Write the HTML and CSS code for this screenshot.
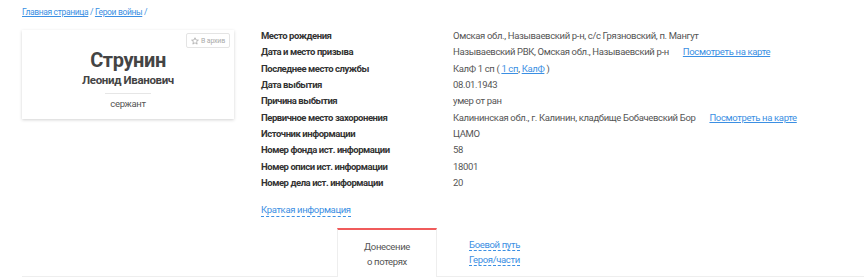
FILE: index.html
```html
<!DOCTYPE html>
<html lang="ru">
<head>
  <title>Струнин Леонид Иванович</title>
  <meta charset="UTF-8">
  <link rel="stylesheet" href="styles.css">
</head>
<body>
  <div class="page">
    <div class="crumbs">
      <a href="#">Главная страница</a> / <a href="#">Герои войны</a> /
    </div>
    <div class="hero">
      <div class="card">
        <button class="archive" type="button">
          <svg width="8" height="8" viewBox="0 0 16 16"><polygon points="8,1.5 10,6 14.8,6.3 11.1,9.4 12.3,14.2 8,11.6 3.7,14.2 4.9,9.4 1.2,6.3 6,6" fill="none" stroke="#999" stroke-width="1.3" stroke-linejoin="round"/></svg>
          В архив
        </button>
        <div class="surname">Струнин</div>
        <div class="given">Леонид Иванович</div>
        <div class="rank">сержант</div>
      </div>
      <div class="info">
        <dl class="facts">
          <dt>Место рождения</dt>
          <dd>Омская обл., Называевский р-н, с/с Грязновский, п. Мангут</dd>
          <dt>Дата и место призыва</dt>
          <dd>Называевский РВК, Омская обл., Называевский р-н <a class="map" href="#">Посмотреть на карте</a></dd>
          <dt>Последнее место службы</dt>
          <dd>КалФ 1 сп ( <a href="#">1 сп</a>, <a href="#">КалФ</a> )</dd>
          <dt>Дата выбытия</dt>
          <dd>08.01.1943</dd>
          <dt>Причина выбытия</dt>
          <dd>умер от ран</dd>
          <dt>Первичное место захоронения</dt>
          <dd>Калининская обл., г. Калинин, кладбище Бобачевский Бор <a class="map" href="#">Посмотреть на карте</a></dd>
          <dt>Источник информации</dt>
          <dd>ЦАМО</dd>
          <dt>Номер фонда ист. информации</dt>
          <dd>58</dd>
          <dt>Номер описи ист. информации</dt>
          <dd>18001</dd>
          <dt>Номер дела ист. информации</dt>
          <dd>20</dd>
        </dl>
        <a class="dashed brief" href="#">Краткая информация</a>
      </div>
    </div>
    <div class="tabs">
      <div class="tab active">Донесение<br>о потерях</div>
      <div class="tab other"><a class="dashed" href="#">Боевой путь</a><br><a class="dashed" href="#">Героя/части</a></div>
    </div>
  </div>
</body>
</html>
```

FILE: styles.css
```css
* {
  box-sizing: border-box;
  margin: 0;
  padding: 0;
}
body {
  font-family: Roboto, "Noto Sans", sans-serif;
  color: #555;
  background: #fff;
  font-size: 9.5px;
  letter-spacing: -0.35px;
}
a {
  color: #3b8fe3;
}
.page {
  padding: 7px 0 0 22px;
}
.crumbs {
  font-size: 8.5px;
  color: #3b8fe3;
  height: 23px;
}
.hero {
  display: flex;
  gap: 27px;
}
.card {
  position: relative;
  width: 212px;
  height: 89px;
  padding-top: 18px;
  text-align: center;
  box-shadow: 0 1px 3px rgba(0, 0, 0, 0.18);
}
.archive {
  position: absolute;
  top: 3px;
  right: 4px;
  display: flex;
  align-items: center;
  gap: 2px;
  height: 15px;
  padding: 0 4px;
  border: 1px solid #e4e4e4;
  border-radius: 2px;
  background: #fff;
  color: #aaa;
  font: 7px Roboto, sans-serif;
  letter-spacing: -0.2px;
}
.surname {
  font-size: 20px;
  font-weight: 700;
  color: #444;
  line-height: 24px;
  letter-spacing: -0.4px;
}
.given {
  font-size: 11.5px;
  font-weight: 700;
  color: #444;
  line-height: 16px;
  padding-bottom: 5px;
}
.rank {
  width: 46px;
  margin: 0 auto;
  border-top: 1px solid #e6e6e6;
  padding-top: 4px;
  white-space: nowrap;
  display: flex;
  justify-content: center;
}
.info {
  margin-top: -2px;
}
.facts {
  display: grid;
  grid-template-columns: 192px auto;
  grid-auto-rows: 16.3px;
  align-items: center;
  line-height: 14px;
}
.facts dt {
  font-weight: 700;
  color: #333;
  letter-spacing: -0.45px;
}
.map {
  margin-left: 12px;
}
.dashed {
  text-decoration: none;
  border-bottom: 1px dashed #3b8fe3;
}
.brief {
  display: inline-block;
  margin-top: 13px;
  line-height: 12px;
}
.tabs {
  display: flex;
  margin-top: 11px;
  padding-left: 315px;
  border-bottom: 1px solid #eee;
  line-height: 15px;
}
.tab {
  width: 100px;
  padding: 9px 0 8px;
  text-align: center;
}
.tab.active {
  border-top: 2px solid #f05b5b;
  border-left: 1px solid #eee;
  border-right: 1px solid #eee;
  margin-bottom: -1px;
  background: #fff;
}
.tab.other {
  padding-left: 32px;
  text-align: left;
}
.tab .dashed {
  line-height: 13px;
}
```
